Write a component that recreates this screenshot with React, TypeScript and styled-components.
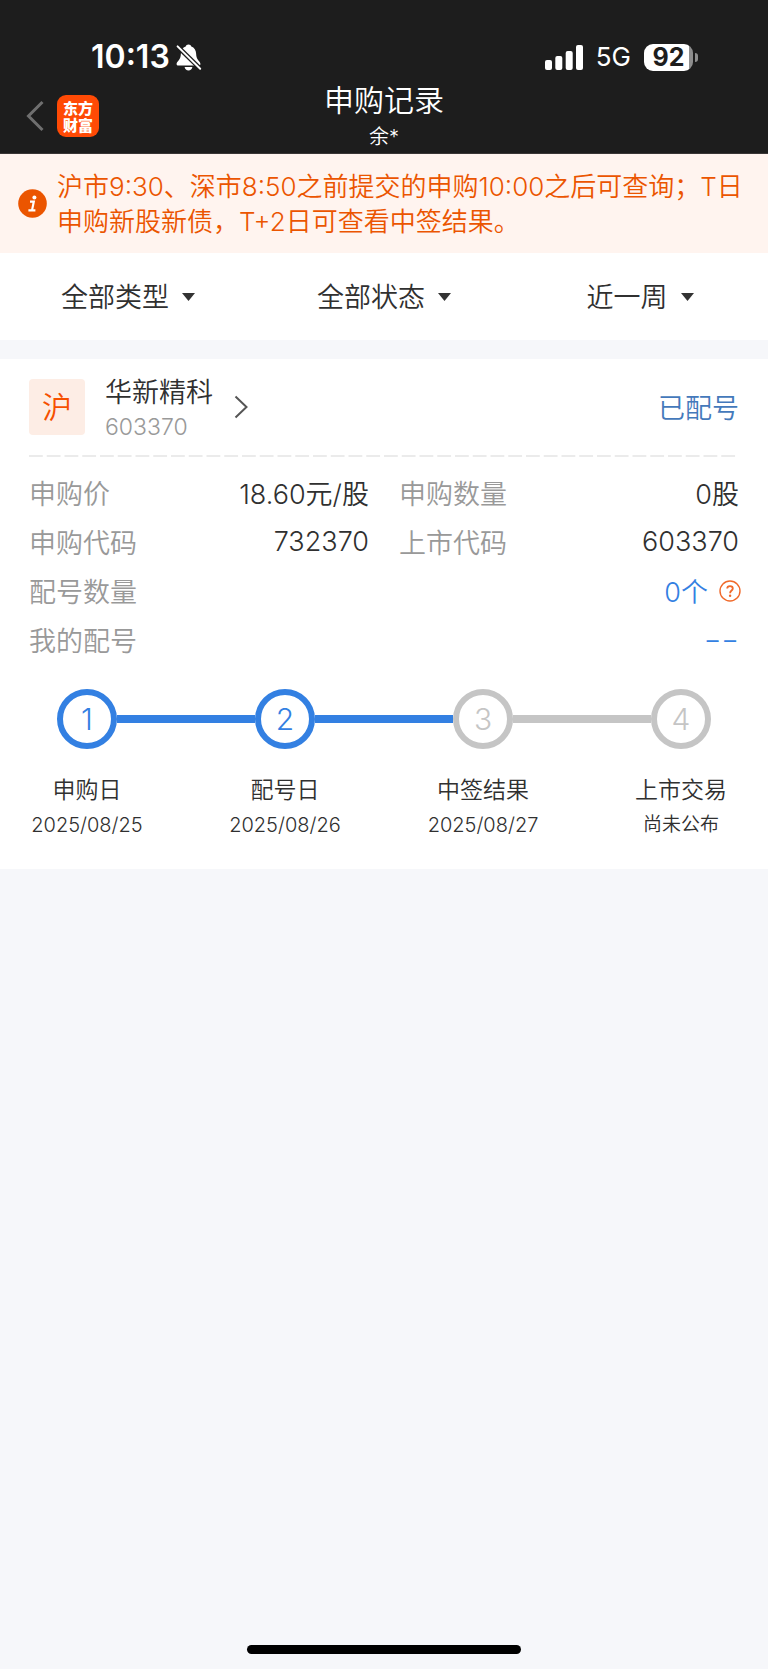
import React, { useState } from "react";
import styled, { createGlobalStyle } from "styled-components";

const sans = `Inter, "Noto Sans CJK SC", sans-serif`;

const color = {
  bar: "#1d1d1d",
  page: "#f6f7fa",
  ink: "#303030",
  muted: "#999999",
  blue: "#3380e2",
  orange: "#eb5500",
  idle: "#c5c5c5",
};

const GlobalStyle = createGlobalStyle`
  * { box-sizing: border-box; }
  body { margin: 0; background: ${color.page}; }
  button, select { font: inherit; color: inherit; background: none; border: 0; padding: 0; margin: 0; cursor: pointer; }
  svg { display: block; flex: none; }
`;

const Screen = styled.div`
  display: flex;
  flex-direction: column;
  min-height: 100vh;
  background: ${color.page};
  color: ${color.ink};
  font-family: ${sans};
  font-weight: 350;
`;

const TopBar = styled.header`
  background: ${color.bar};
  color: #fff;
  padding-top: 38px;
  border-bottom: 1px solid #3a3636;
`;

const StatusBar = styled.div`
  display: flex;
  align-items: center;
  justify-content: space-between;
  height: 38px;
  padding: 0 70px 0 91px;
`;

const StatusGroup = styled.div<{ $gap: number }>`
  display: flex;
  align-items: center;
  gap: ${(p) => p.$gap}px;
`;

const Clock = styled.time`
  font-size: 32px;
  font-weight: 600;
  line-height: 38px;
`;

const Network = styled.span`
  font-size: 26px;
  font-weight: 400;
  line-height: 38px;
`;

const Battery = styled.div`
  display: flex;
  align-items: center;
  gap: 2px;
`;

const BatteryBody = styled.div`
  width: 49px;
  height: 27px;
  border-radius: 9px;
  background: linear-gradient(to right, #fff 45px, #8e8e8e 45px);
  color: ${color.bar};
  font-size: 25px;
  font-weight: 700;
  line-height: 27px;
  text-align: center;
`;

const BatteryTip = styled.div`
  width: 3px;
  height: 9px;
  border-radius: 0 3px 3px 0;
  background: #8e8e8e;
`;

const NavBar = styled.nav`
  display: grid;
  grid-template-columns: 1fr auto 1fr;
  padding: 4px 26px 1px;
`;

const NavStart = styled.div`
  display: flex;
  align-items: center;
  gap: 13px;
`;

const BackButton = styled.button`
  color: #6f6f6f;
`;

const AppLogo = styled.div`
  width: 42px;
  height: 42px;
  padding: 4px 0;
  border-radius: 9px;
  background: #ff4a05;
  font-family: "Noto Sans CJK SC", sans-serif;
  font-size: 15px;
  font-weight: 900;
  line-height: 17px;
  text-align: center;
`;

const TitleBlock = styled.div`
  text-align: center;
`;

const Title = styled.h1`
  margin: 0;
  font-size: 30px;
  font-weight: 350;
  line-height: 40px;
`;

const Account = styled.p`
  margin: 0;
  padding-top: 2px;
  font-size: 20px;
  line-height: 30px;
`;

const Notice = styled.section`
  display: flex;
  align-items: center;
  gap: 10px;
  padding: 12px 18px 13px;
  background: #fff4ef;
  color: ${color.orange};
`;

const NoticeText = styled.p`
  margin: 0;
  padding: 3px 0 1px;
  font-size: 26px;
  line-height: 35px;
`;

const Filters = styled.div`
  display: grid;
  grid-template-columns: repeat(3, 1fr);
  margin-bottom: 19px;
  background: #fff;
`;

const FilterCell = styled.div`
  display: flex;
  align-items: center;
  justify-content: center;
  height: 87px;
`;

const FilterSelect = styled.select`
  appearance: none;
  field-sizing: content;
  padding: 3px 26px 0 0;
  font-size: 27px;
  line-height: 40px;
  outline-offset: 4px;
`;

const Caret = styled.svg`
  margin-left: -13px;
  pointer-events: none;
`;

const Card = styled.article`
  padding: 12px 29px 27px;
  background: #fff;
`;

const CardHead = styled.div`
  display: flex;
  align-items: center;
  justify-content: space-between;
  padding-bottom: 12px;
`;

const StockLink = styled.a`
  display: flex;
  align-items: center;
  color: inherit;
  text-decoration: none;
`;

const Market = styled.span`
  width: 56px;
  height: 56px;
  margin-right: 20px;
  border-radius: 4px;
  background: #fdede5;
  color: #f65000;
  font-size: 30px;
  line-height: 56px;
  text-align: center;
`;

const StockTitle = styled.span`
  padding-top: 4px;
`;

const StockName = styled.span`
  display: block;
  font-size: 27px;
  line-height: 36px;
`;

const StockCode = styled.span`
  display: block;
  color: ${color.muted};
  font-size: 23px;
  line-height: 32px;
`;

const Chevron = styled.svg`
  margin-left: 21px;
`;

const Status = styled.span`
  padding-top: 4px;
  color: #4479bb;
  font-size: 27px;
  line-height: 36px;
`;

const Dashes = styled.hr`
  width: 100%;
  height: 2px;
  margin: 0;
  border: 0;
  background: linear-gradient(to right, #ebebeb 78%, transparent 78%) 0 0 / 2.5% 100%;
`;

const Details = styled.dl`
  display: grid;
  grid-template-columns: 1fr 1fr;
  column-gap: 30px;
  margin: 11px 0 25px;
`;

const Detail = styled.div<{ $wide?: boolean }>`
  display: flex;
  align-items: center;
  justify-content: space-between;
  grid-column: ${(p) => (p.$wide ? "1 / -1" : "auto")};
  height: 49px;
  font-size: 27px;
`;

const Term = styled.dt`
  color: ${color.muted};
`;

const Value = styled.dd<{ $accent?: boolean }>`
  display: flex;
  align-items: center;
  gap: 11px;
  margin: 0;
  color: ${(p) => (p.$accent ? color.blue : color.ink)};
`;

const HelpButton = styled.button`
  margin-right: -2px;
  color: #f0692a;
`;

const Steps = styled.ol`
  display: flex;
  margin: 0;
  padding: 0;
  list-style: none;
`;

const Step = styled.li`
  display: flex;
  flex-direction: column;
  align-items: center;
  flex: none;
  width: 116px;
  white-space: nowrap;
`;

const StepDot = styled.span<{ $done: boolean }>`
  width: 60px;
  height: 60px;
  margin-bottom: 23px;
  border: 6px solid currentColor;
  border-radius: 50%;
  color: ${(p) => (p.$done ? color.blue : color.idle)};
  font-size: 30px;
  font-weight: 300;
  line-height: 48px;
  text-align: center;
`;

const Connector = styled.li<{ $done: boolean }>`
  flex: 1;
  height: 8px;
  margin: 26px -28px 0;
  background: ${(p) => (p.$done ? color.blue : color.idle)};
`;

const StepName = styled.span`
  font-size: 23px;
  line-height: 36px;
`;

const StepDate = styled.span<{ $pending: boolean }>`
  font-size: ${(p) => (p.$pending ? 19 : 20)}px;
  line-height: 34px;
`;

const HomeIndicator = styled.div`
  width: 274px;
  height: 9px;
  margin: auto auto 15px;
  border-radius: 5px;
  background: #000;
`;

const filters = [
  { label: "类型", options: ["全部类型", "新股", "新债"] },
  { label: "状态", options: ["全部状态", "已配号", "已中签"] },
  { label: "时间", options: ["近一周", "近一月", "近三月"] },
];

const steps = [
  { name: "申购日", date: "2025/08/25", done: true },
  { name: "配号日", date: "2025/08/26", done: true },
  { name: "中签结果", date: "2025/08/27", done: false },
  { name: "上市交易", date: null, done: false },
];

function Filter({ label, options }: { label: string; options: string[] }) {
  const [value, setValue] = useState(options[0]);
  return (
    <FilterCell>
      <FilterSelect aria-label={label} value={value} onChange={(e) => setValue(e.target.value)}>
        {options.map((o) => (
          <option key={o}>{o}</option>
        ))}
      </FilterSelect>
      <Caret width="13" height="8" viewBox="0 0 13 8" aria-hidden="true">
        <path d="M0 0H13L6.5 8Z" fill="#333" />
      </Caret>
    </FilterCell>
  );
}

export default function App() {
  return (
    <Screen>
      <GlobalStyle />
      <TopBar>
        <StatusBar>
          <StatusGroup $gap={6}>
            <Clock>10:13</Clock>
            <svg width="26" height="27" viewBox="0 0 26 27" aria-label="静音">
              <path
                d="M12.5 0.5C11 0.5 10 1.4 9.7 2.5C6.6 3.6 5 6.2 4.9 9.6C4.8 13.5 3.8 15.2 2.2 17C1.2 18.1 0.6 19 0.6 20C0.6 21 1.3 21.6 2.5 21.6H22.5C23.7 21.6 24.4 21 24.4 20C24.4 19 23.8 18.1 22.8 17C21.2 15.2 20.2 13.5 20.1 9.6C20 6.2 18.4 3.6 15.3 2.5C15 1.4 14 0.5 12.5 0.5ZM8.6 23H16.4C16 25.2 14.5 26.5 12.5 26.5C10.5 26.5 9 25.2 8.6 23Z"
                fill="#fff"
              />
              <path d="M1.2 2.2L24.8 25.2" stroke="#1d1d1d" strokeWidth="4.6" />
              <path d="M1.6 2.4L24.2 24.8" stroke="#fff" strokeWidth="2" strokeLinecap="round" />
            </svg>
          </StatusGroup>
          <StatusGroup $gap={13}>
            <svg width="38" height="25" viewBox="0 0 38 25" fill="#fff" aria-label="信号">
              <rect x="0" y="15" width="7" height="10" rx="2" />
              <rect x="10.3" y="11" width="7" height="14" rx="2" />
              <rect x="20.7" y="6" width="7" height="19" rx="2" />
              <rect x="31" y="0" width="7" height="25" rx="2" />
            </svg>
            <Network>5G</Network>
            <Battery>
              <BatteryBody>92</BatteryBody>
              <BatteryTip />
            </Battery>
          </StatusGroup>
        </StatusBar>
        <NavBar>
          <NavStart>
            <BackButton type="button" aria-label="返回">
              <svg width="18" height="32" viewBox="0 0 18 32" fill="none" stroke="currentColor" strokeWidth="3">
                <path d="M16.5 2L2.5 16L16.5 30" />
              </svg>
            </BackButton>
            <AppLogo>
              东方
              <br />
              财富
            </AppLogo>
          </NavStart>
          <TitleBlock>
            <Title>申购记录</Title>
            <Account>余*</Account>
          </TitleBlock>
        </NavBar>
      </TopBar>

      <Notice>
        <svg width="29" height="29" viewBox="0 0 29 29" aria-hidden="true">
          <circle cx="14.5" cy="14.5" r="14.3" fill="#eb5500" />
          <circle cx="16.4" cy="8.6" r="2" fill="#fff" />
          <path d="M12 12.6H15.8L14 21.4M10.4 21.4H17.4" fill="none" stroke="#fff" strokeWidth="2.2" />
        </svg>
        <NoticeText>
          沪市9:30、深市8:50之前提交的申购10:00之后可查询；T日申购新股新债，T+2日可查看中签结果。
        </NoticeText>
      </Notice>

      <Filters>
        {filters.map((f) => (
          <Filter key={f.label} {...f} />
        ))}
      </Filters>

      <Card>
        <CardHead>
          <StockLink href="#603370">
            <Market>沪</Market>
            <StockTitle>
              <StockName>华新精科</StockName>
              <StockCode>603370</StockCode>
            </StockTitle>
            <Chevron width="15" height="24" viewBox="0 0 15 24" fill="none" stroke="#555" strokeWidth="2" aria-hidden="true">
              <path d="M1.5 1.5L12.5 12L1.5 22.5" />
            </Chevron>
          </StockLink>
          <Status>已配号</Status>
        </CardHead>
        <Dashes />
        <Details>
          <Detail>
            <Term>申购价</Term>
            <Value>18.60元/股</Value>
          </Detail>
          <Detail>
            <Term>申购数量</Term>
            <Value>0股</Value>
          </Detail>
          <Detail>
            <Term>申购代码</Term>
            <Value>732370</Value>
          </Detail>
          <Detail>
            <Term>上市代码</Term>
            <Value>603370</Value>
          </Detail>
          <Detail $wide>
            <Term>配号数量</Term>
            <Value $accent>
              0个
              <HelpButton type="button" aria-label="配号数量说明">
                <svg width="22" height="22" viewBox="0 0 22 22" fill="none" stroke="currentColor">
                  <circle cx="11" cy="11" r="10" strokeWidth="1.4" />
                  <path d="M8.2 8.6C8.2 7 9.4 6.1 11 6.1C12.7 6.1 13.8 7.1 13.8 8.5C13.8 10.6 11.1 10.5 11.1 13.2" strokeWidth="1.8" />
                  <circle cx="11.1" cy="15.8" r="1.2" fill="currentColor" stroke="none" />
                </svg>
              </HelpButton>
            </Value>
          </Detail>
          <Detail $wide>
            <Term>我的配号</Term>
            <Value $accent>−−</Value>
          </Detail>
        </Details>
        <Steps>
          {steps.map((s, i) => (
            <React.Fragment key={s.name}>
              {i > 0 && <Connector $done={steps[i - 1].done} aria-hidden="true" />}
              <Step>
                <StepDot $done={s.done}>{i + 1}</StepDot>
                <StepName>{s.name}</StepName>
                <StepDate $pending={!s.date}>{s.date ?? "尚未公布"}</StepDate>
              </Step>
            </React.Fragment>
          ))}
        </Steps>
      </Card>

      <HomeIndicator />
    </Screen>
  );
}
